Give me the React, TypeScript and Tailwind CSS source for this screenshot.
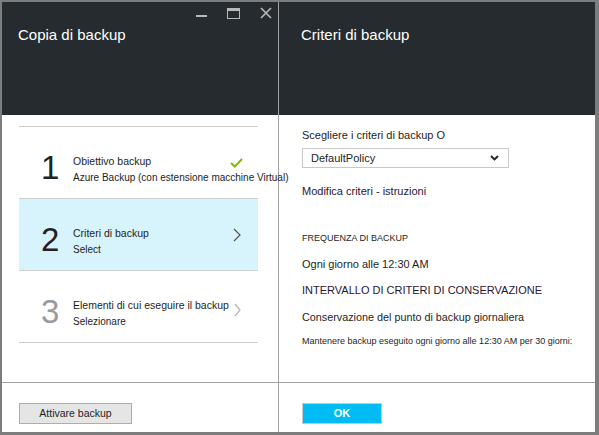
import React from "react";

const font = { fontFamily: '"Liberation Sans", Arial, sans-serif' };

function Step({ n, title, sub, active, muted, icon, iconClass }: { n: string; title: string; sub: string; active?: boolean; muted?: boolean; icon: React.ReactNode; iconClass: string }) {
  return (
    <div className={`relative flex h-[72px] items-start border-b border-[#cfcfcf] ${active ? "bg-[#d7f3fc]" : ""}`}>
      <div className={`w-[54px] shrink-0 pl-[22px] pt-[24px] text-[33px] leading-none font-light ${muted ? "text-[#9a9a9a]" : "text-[#222]"}`}>{n}</div>
      <div className="flex flex-col gap-[3px] pt-[28px] text-[#1e1e1e]">
        <span className="text-[10.5px] leading-[13px] whitespace-nowrap">{title}</span>
        <span className="text-[10px] leading-[13px] whitespace-nowrap">{sub}</span>
      </div>
      <div className={`absolute ${iconClass}`}>{icon}</div>
    </div>
  );
}

export default function App() {
  return (
    <div style={font} className="flex h-[435px] w-[599px] border-t-2 border-l-2 border-r-4 border-b-[3px] border-[#7d7d7d] bg-white">
      {/* left blade */}
      <div className="flex w-[276px] flex-col">
        <div className="relative h-[113px] bg-[#262b30] pl-4 pt-[22px]">
          <h1 className="text-[15px] text-white">Copia di backup</h1>
          <div className="absolute right-[6px] top-[4px] flex items-start gap-[20px]">
            <div className="mt-[9px] h-[2px] w-[11px] bg-[#b9b9b9]" />
            <div className="mt-[2px] h-[11px] w-[13px] border border-t-[3px] border-[#b9b9b9]" />
            <svg width="12" height="12" viewBox="0 0 12 12" className="mt-[1px]">
              <path d="M1 1 L11 11 M11 1 L1 11" stroke="#b9b9b9" strokeWidth="1.6" />
            </svg>
          </div>
        </div>
        <div className="flex-1 pl-[17px] pr-[20px] pt-[11px]">
          <div className="border-t border-[#cfcfcf]">
            <Step
              n="1"
              title="Obiettivo backup"
              sub="Azure Backup (con estensione macchine Virtual)"
              iconClass="left-[211px] top-[31px]"
              icon={
                <svg width="13" height="10" viewBox="0 0 13 10">
                  <path d="M1 5 L4.8 8.6 L12 1" stroke="#7fba00" strokeWidth="2" fill="none" />
                </svg>
              }
            />
            <Step
              n="2"
              title="Criteri di backup"
              sub="Select"
              active
              iconClass="left-[214px] top-[29px]"
              icon={
                <svg width="8" height="14" viewBox="0 0 8 14">
                  <path d="M1 1 L7 7 L1 13" stroke="#555" strokeWidth="1.2" fill="none" />
                </svg>
              }
            />
            <Step
              n="3"
              title="Elementi di cui eseguire il backup"
              sub="Selezionare"
              muted
              iconClass="left-[215px] top-[32px]"
              icon={
                <svg width="7" height="14" viewBox="0 0 7 14">
                  <path d="M1 1 L6 7 L1 13" stroke="#b5b5b5" strokeWidth="1.2" fill="none" />
                </svg>
              }
            />
          </div>
        </div>
        <div className="h-[50px] border-t border-[#a3a3a3] px-[17px] pt-[17px]">
          <button className="h-[21px] w-[113px] border border-[#adadad] bg-[#e5e5e5] text-[10.5px] text-[#1e1e1e]">Attivare backup</button>
        </div>
      </div>

      <div className="w-px bg-[#a3a3a3]" />

      {/* right blade */}
      <div className="flex flex-1 flex-col">
        <div className="h-[113px] bg-[#262b30] pl-[22px] pt-[22px]">
          <h1 className="text-[15px] text-white">Criteri di backup</h1>
        </div>
        <div className="flex-1 pl-[23px] pt-[13px] text-[#1e1e1e]">
          <p className="text-[11px] leading-[14px]">Scegliere i criteri di backup O</p>
          <div className="mt-[6px] flex h-[20px] w-[207px] items-center justify-between border border-[#c8c8c8] pl-[8px] pr-[9px] text-[11px]">
            <span>DefaultPolicy</span>
            <svg width="9" height="6" viewBox="0 0 9 6">
              <path d="M1 1 L4.5 4.5 L8 1" stroke="#222" strokeWidth="1.8" fill="none" />
            </svg>
          </div>
          <p className="mt-[16px] text-[11px] leading-[14px] text-[#2b1338]">Modifica criteri - istruzioni</p>
          <p className="mt-[34px] text-[9px] leading-[12px]">FREQUENZA DI BACKUP</p>
          <p className="mt-[13px] text-[11px] leading-[15px]">Ogni giorno alle 12:30 AM</p>
          <p className="mt-[11px] text-[11px] leading-[15px] text-[#2a1533]">INTERVALLO DI CRITERI DI CONSERVAZIONE</p>
          <p className="mt-[12px] text-[10.8px] leading-[14px]">Conservazione del punto di backup giornaliera</p>
          <p className="mt-[11px] text-[9px] leading-[12px]">Mantenere backup eseguito ogni giorno alle 12:30 AM per 30 giorni:</p>
        </div>
        <div className="h-[50px] border-t border-[#a3a3a3] pl-[23px] pt-[17px]">
          <button className="h-[21px] w-[80px] border border-[#c8c8c8] bg-[#00bcf2] text-[11px] font-bold text-white">OK</button>
        </div>
      </div>
    </div>
  );
}
